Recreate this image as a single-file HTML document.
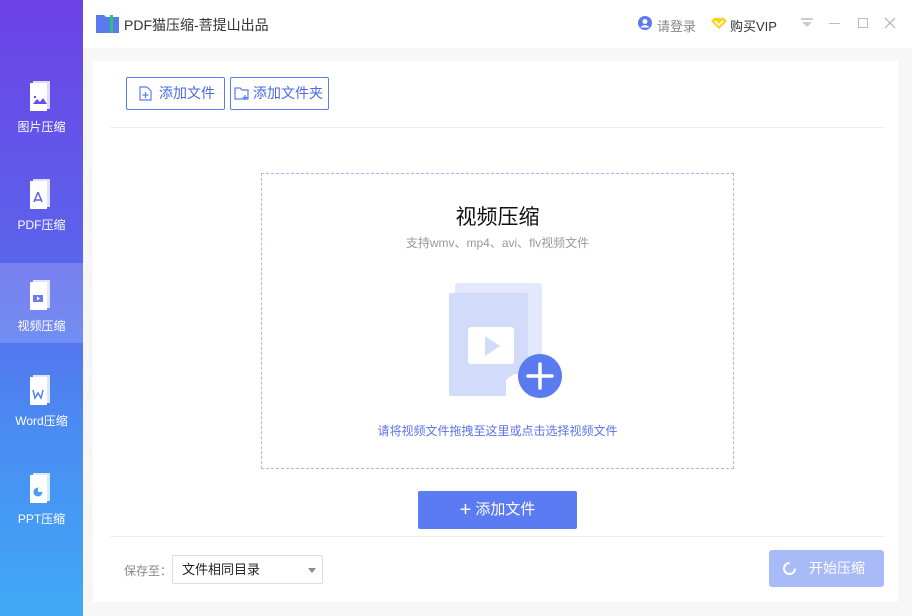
<!DOCTYPE html>
<html><head><meta charset="utf-8"><style>
*{margin:0;padding:0;box-sizing:border-box}
body{width:912px;height:616px;overflow:hidden;background:#f7f7f7;font-family:"Liberation Sans","Noto Sans CJK SC",sans-serif;position:relative}
.abs{position:absolute}
#side{left:0;top:0;width:83px;height:616px;background:linear-gradient(#6c42e7,#5a66ec 45%,#4a8cf2 70%,#3fa9f6)}
.item{position:absolute;left:0;width:83px;height:80px;color:#fff;font-size:12px;text-align:center}
.item .lbl{position:absolute;left:0;width:83px;top:56px}
.item svg{position:absolute;left:29px;top:18px}
#top{left:83px;top:0;width:829px;height:48px;background:#fff}
#panel{left:93px;top:61px;width:805px;height:541px;background:#fff}
.btn{position:absolute;border:1px solid #5b7bf2;border-radius:2px;color:#4a68e6;font-size:14px;height:33px;line-height:31px}
</style></head><body>
<div id="side" class="abs">
 <div class="item" style="top:62px;"><svg width="26" height="34" viewBox="0 0 26 34"><path d="M4 1h17v28H4z" fill="#fff" opacity=".8"/><path d="M1 3h17v28H1z" fill="#fff"/><path d="M4 24l4-5 3 3 3-4 4 6z" fill="#6a4ce8"/><rect x="5" y="16" width="2" height="2" fill="#6a4ce8"/></svg><div class="lbl">图片压缩</div></div>
 <div class="item" style="top:160px;"><svg width="26" height="34" viewBox="0 0 26 34"><path d="M4 1h17v28H4z" fill="#fff" opacity=".8"/><path d="M1 3h17v28H1z" fill="#fff"/><path d="M9 14l-4 10M9 14l4 10M5 22h8" stroke="#5f5fea" stroke-width="1.5" fill="none"/></svg><div class="lbl">PDF压缩</div></div>
 <div class="item" style="top:263px;background:rgba(255,255,255,.18)"><svg width="26" height="34" viewBox="0 0 26 34" style="top:16px"><path d="M4 1h17v28H4z" fill="#fff" opacity=".8"/><path d="M1 3h17v28H1z" fill="#fff"/><rect x="4" y="16" width="10" height="7" fill="#6b7cee"/><path d="M8 17.5v4l3-2z" fill="#fff"/></svg><div class="lbl" style="top:54px">视频压缩</div></div>
 <div class="item" style="top:356px;"><svg width="26" height="34" viewBox="0 0 26 34"><path d="M4 1h17v28H4z" fill="#fff" opacity=".8"/><path d="M1 3h17v28H1z" fill="#fff"/><path d="M4 16l2 8 3-5 3 5 2-8" stroke="#4f82f0" stroke-width="1.5" fill="none"/></svg><div class="lbl">Word压缩</div></div>
 <div class="item" style="top:454px;"><svg width="26" height="34" viewBox="0 0 26 34"><path d="M4 1h17v28H4z" fill="#fff" opacity=".8"/><path d="M1 3h17v28H1z" fill="#fff"/><circle cx="9" cy="20" r="4.5" fill="#479ef4"/><path d="M9 20V15.5A4.5 4.5 0 0 1 13.5 20z" fill="#fff"/></svg><div class="lbl">PPT压缩</div></div>
</div>
<div id="top" class="abs">
 <svg class="abs" style="left:13px;top:13px" width="23" height="20" viewBox="0 0 23 20"><path d="M0 2h8l2 2h13v16H0z" fill="#5a7af0"/><rect x="14" y="2" width="3" height="18" fill="#2bc37a"/></svg>
 <div class="abs" style="left:41px;top:15px;font-size:14px;color:#333">PDF猫压缩-菩提山出品</div>
 <svg class="abs" style="left:555px;top:16px" width="14" height="14"><circle cx="7" cy="7" r="7" fill="#5a7af0"/><circle cx="7" cy="5.5" r="2.5" fill="#fff"/><path d="M2.5 11.5a5 4 0 0 1 9 0" fill="#fff"/></svg>
 <div class="abs" style="left:574px;top:16px;font-size:13px;color:#888">请登录</div>
 <svg class="abs" style="left:628px;top:18px" width="16" height="11"><path d="M0 3l3-3h10l3 3-8 8z" fill="#ffd11a"/><path d="M4 3l4 4 4-4" stroke="#fff" stroke-width="1.6" fill="none"/></svg>
 <div class="abs" style="left:647px;top:16px;font-size:13px;color:#333">购买VIP</div>
 <svg class="abs" style="left:718px;top:18px" width="12" height="10"><rect width="12" height="2" fill="#ccc"/><path d="M1 4h10l-5 5z" fill="#ccc"/></svg>
 <div class="abs" style="left:746px;top:23px;width:11px;height:1px;background:#bbb"></div>
 <div class="abs" style="left:775px;top:18px;width:10px;height:10px;border:1px solid #bbb"></div>
 <svg class="abs" style="left:801px;top:17px" width="12" height="12"><path d="M1 1l10 10M11 1L1 11" stroke="#bbb" stroke-width="1.4"/></svg>
</div>
<div id="panel" class="abs"></div>
<div class="btn" style="left:126px;top:77px;width:99px"><svg class="abs" style="left:12px;top:8px" width="13" height="15"><path d="M1 1h7l4 4v9H1z" stroke="#5b7bf2" fill="none" stroke-width="1.2"/><path d="M6.5 6v6M3.5 9h6" stroke="#5b7bf2" stroke-width="1.2"/></svg><span class="abs" style="left:32px">添加文件</span></div>
<div class="btn" style="left:230px;top:77px;width:99px"><svg class="abs" style="left:3px;top:8px" width="15" height="15"><path d="M1 2h5l2 2h6v9H1z" stroke="#5b7bf2" fill="none" stroke-width="1.2"/><path d="M11 9v5M8.5 11.5h5" stroke="#5b7bf2" stroke-width="1.2"/></svg><span class="abs" style="left:22px">添加文件夹</span></div>
<div class="abs" style="left:110px;top:127px;width:775px;height:1px;background:#eee"></div>
<div class="abs" style="left:261px;top:173px;width:473px;height:296px;border:1px dashed #a9b8f0"></div>
<div class="abs" style="left:261px;top:201px;width:473px;text-align:center;font-size:21px;color:#111">视频压缩</div>
<div class="abs" style="left:261px;top:234px;width:473px;text-align:center;font-size:12px;color:#999">支持wmv、mp4、avi、flv视频文件</div>
<svg class="abs" style="left:445px;top:280px" width="122" height="120"><rect x="10" y="3" width="87" height="113" rx="3" fill="#e3e8fc"/><rect x="4" y="13" width="79" height="103" rx="2" fill="#d3dbfa"/><rect x="23" y="47" width="46" height="37" rx="3" fill="#fff"/><path d="M40 56v20l15-10z" fill="#d3dbfa"/><path d="M61 116v-16l8-6h14v22z" fill="#fff"/><circle cx="95" cy="96" r="22" fill="#5a7af0"/><path d="M95 84v24M83 96h24" stroke="#fff" stroke-width="3.5" stroke-linecap="round"/></svg>
<div class="abs" style="left:261px;top:422px;width:473px;text-align:center;font-size:12px;color:#5a73e8">请将视频文件拖拽至这里或点击选择视频文件</div>
<div class="abs" style="left:418px;top:491px;width:159px;height:38px;background:#5b7bf2;border-radius:2px;color:#fff;font-size:15px;line-height:38px;text-align:center"><span style="font-size:20px;vertical-align:-2px">+</span> 添加文件</div>
<div class="abs" style="left:110px;top:536px;width:775px;height:1px;background:#eee"></div>
<div class="abs" style="left:124px;top:562px;font-size:12px;color:#888">保存至：</div>
<div class="abs" style="left:172px;top:555px;width:151px;height:29px;border:1px solid #ddd;border-radius:2px;font-size:13px;color:#222;line-height:27px;padding-left:9px">文件相同目录<svg class="abs" style="left:135px;top:12px" width="8" height="5"><path d="M0 0h8l-4 5z" fill="#888"/></svg></div>
<div class="abs" style="left:769px;top:550px;width:115px;height:37px;background:#a9baf9;border-radius:3px;color:#fff;font-size:14px;line-height:37px;padding-left:40px">开始压缩<svg class="abs" style="left:12px;top:10px" width="17" height="17"><path d="M14 8.5A5.5 5.5 0 1 1 8.5 3" stroke="#fff" stroke-width="2" fill="none"/></svg></div>
</body></html>
